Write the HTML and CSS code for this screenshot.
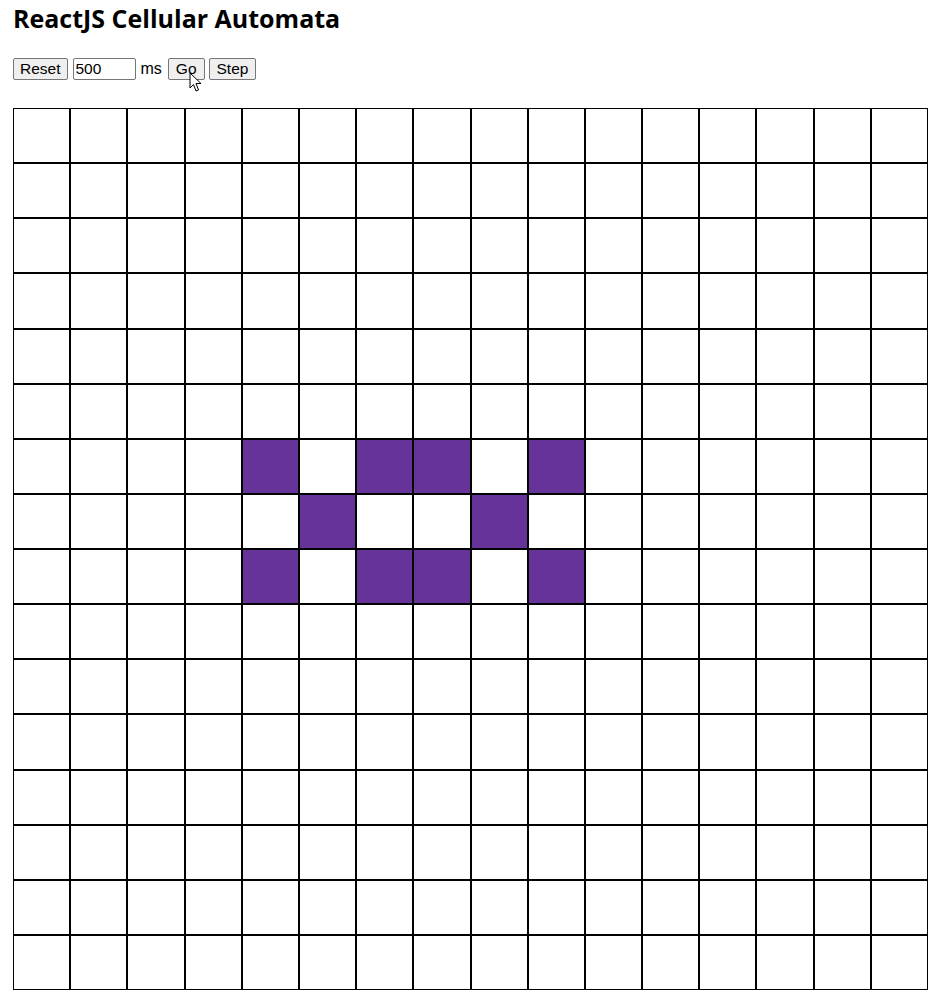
FILE: index.html
```html
<!DOCTYPE html>
<html>
<head>
<meta charset="utf-8">
<link rel="stylesheet" href="styles.css">
</head>
<body>
<div class="app">
  <h1 class="title">ReactJS Cellular Automata</h1>
  <div class="controls">
    <button class="btn">Reset</button>
    <input class="interval" type="text" value="500">
    <span class="unit">ms</span>
    <span class="go-wrap"><button class="btn wide">Go</button>
      <svg class="cursor" width="14" height="22" viewBox="0 0 14 22"><path d="M1 1 L1 16 L4.5 12.5 L7 19 L9.5 18 L7 11.5 L12 11.5 Z" fill="#fff" stroke="#000" stroke-width="1" stroke-linejoin="miter"/></svg>
    </span>
    <button class="btn wide step">Step</button>
  </div>
  <div class="board" id="board"></div>
</div>
<script>
  var alive = {"6,4":1,"6,6":1,"6,7":1,"6,9":1,"7,5":1,"7,8":1,"8,4":1,"8,6":1,"8,7":1,"8,9":1};
  var b = document.getElementById('board');
  for (var r = 0; r < 16; r++) {
    for (var c = 0; c < 16; c++) {
      var d = document.createElement('div');
      d.className = 'cell' + (alive[r + ',' + c] ? ' alive' : '');
      b.appendChild(d);
    }
  }
</script>
</body>
</html>
```
FILE: styles.css
```css
html, body {
  margin: 0;
  padding: 0;
  background: #ffffff;
}
.app {
  padding: 0 0 0 13px;
  font-family: "Liberation Sans", Arial, sans-serif;
  font-size: 16px;
  color: #000;
}
.title {
  font-family: "Open Sans", "Noto Sans", sans-serif;
  font-weight: 700;
  font-size: 25px;
  line-height: 36px;
  margin: 0;
  padding: 0;
}
.controls {
  display: flex;
  align-items: center;
  margin-top: 22px;
  height: 22px;
}
.btn {
  font-family: "Liberation Sans", Arial, sans-serif;
  font-size: 15.5px;
  height: 22px;
  padding: 0 6px;
  margin: 0;
  border: 1px solid #767676;
  border-radius: 2px;
  background: #efefef;
  color: #000;
  line-height: 18px;
}
.btn.wide {
  padding: 0 7px;
}
.interval {
  font-family: "Liberation Sans", Arial, sans-serif;
  font-size: 15.5px;
  width: 63px;
  height: 22px;
  box-sizing: border-box;
  padding: 1px 2px;
  border: 1px solid #767676;
  border-radius: 2px;
  margin: 0 0 0 5px;
}
.unit {
  font-size: 16px;
  margin: 0 6px 0 5px;
}
.go-wrap {
  position: relative;
  display: inline-flex;
}
.step {
  margin-left: 4px;
}
.cursor {
  position: absolute;
  left: 21px;
  top: 14px;
}
.board {
  margin-top: 28px;
  width: 915px;
  height: 882px;
  display: grid;
  grid-template-columns: repeat(16, 1fr);
  grid-template-rows: repeat(16, 1fr);
}
.cell {
  border: 1px solid #000;
  background: #fff;
}
.cell.alive {
  background: #663399;
}
```
